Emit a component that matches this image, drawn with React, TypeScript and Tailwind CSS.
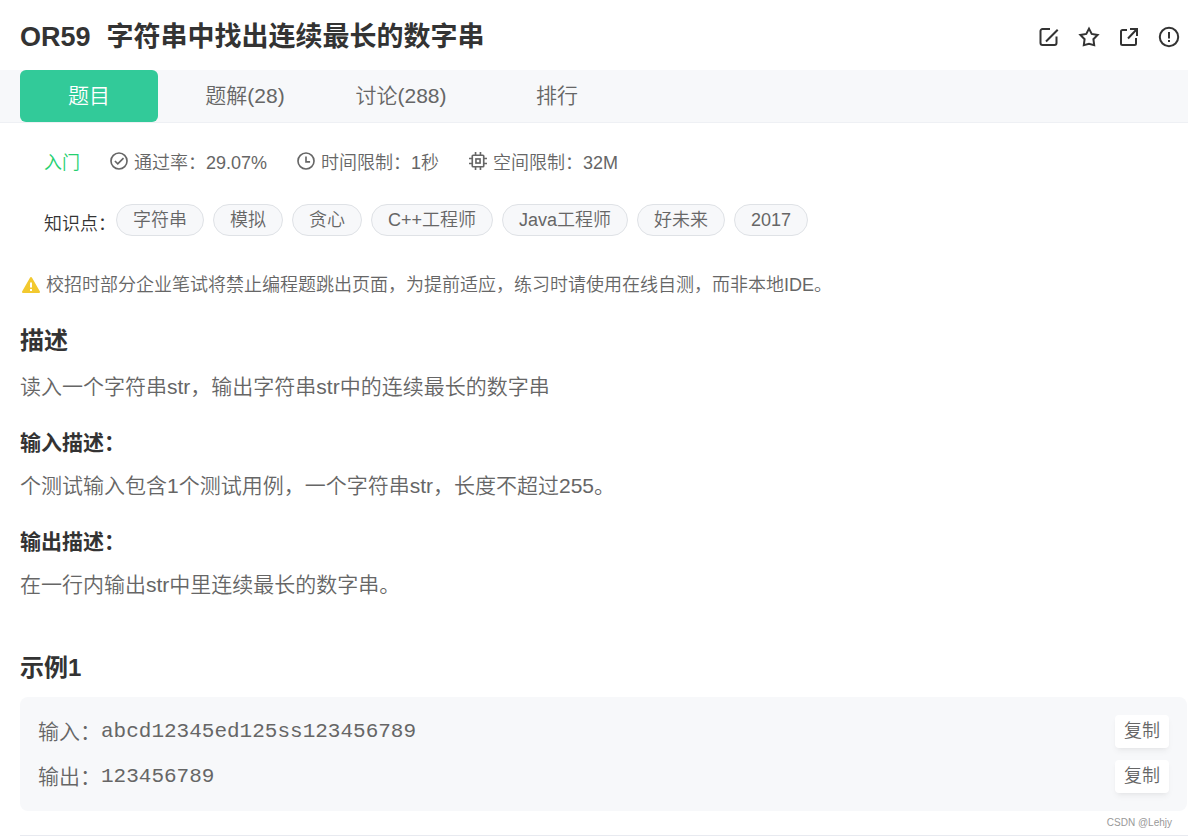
import React from "react";

type Meta = { icon: React.ReactNode; label: string; value: string };
type Sample = { label: string; value: string };

const tabs = ["题目", "题解(28)", "讨论(288)", "排行"];

const tags = ["字符串", "模拟", "贪心", "C++工程师", "Java工程师", "好未来", "2017"];

const samples: Sample[] = [
  { label: "输入：", value: "abcd12345ed125ss123456789" },
  { label: "输出：", value: "123456789" },
];

const Icon = ({
  children,
  className,
}: {
  children: React.ReactNode;
  className: string;
}) => (
  <svg
    viewBox="0 0 22 22"
    fill="none"
    stroke="currentColor"
    strokeWidth="2"
    className={className}
    aria-hidden="true"
  >
    {children}
  </svg>
);

const actions = [
  {
    name: "编辑",
    icon: (
      <>
        <path d="M12 3H4.500A2 2 0 0 0 2.500 5v12A2 2 0 0 0 4.500 19h12a2 2 0 0 0 2-2V10.500" />
        <path d="M8 15.500 19.700 3.800" />
      </>
    ),
  },
  {
    name: "收藏",
    icon: (
      <path d="m11 2.600 2.700 5.300 5.900 1-4.200 4.300.8 5.900-5.200-1.200-5.200 1.200.8-5.900L2.400 8.900l5.900-1L11 2.600Z" />
    ),
  },
  {
    name: "分享",
    icon: (
      <>
        <path d="M9 4H4.500A1.500 1.500 0 0 0 3 5.500v12A1.500 1.500 0 0 0 4.500 19h12a1.500 1.500 0 0 0 1.500-1.500V12" />
        <path d="M12 3h7v7M19 3l-9 9.500" />
      </>
    ),
  },
  {
    name: "反馈",
    icon: (
      <>
        <circle cx="11" cy="11" r="9.200" />
        <path d="M11 6v6.500M11 14v2" />
      </>
    ),
  },
];

const metas: Meta[] = [
  {
    label: "通过率：",
    value: "29.07%",
    icon: (
      <>
        <circle cx="11" cy="11" r="9.800" />
        <path d="m6 11 3.500 3.500 7-7" />
      </>
    ),
  },
  {
    label: "时间限制：",
    value: "1秒",
    icon: (
      <>
        <circle cx="11" cy="11" r="9.800" />
        <path d="M11 5.500V12h5" />
      </>
    ),
  },
  {
    label: "空间限制：",
    value: "32M",
    icon: (
      <>
        <rect x="4" y="4" width="14" height="14" rx="1" />
        <rect x="8.500" y="8.500" width="5" height="5" />
        <path d="M8 4V0M14 4V0M8 22v-4M14 22v-4M4 8H0M4 14H0M22 8h-4M22 14h-4" />
      </>
    ),
  },
];

const Section = ({ title, text }: { title: string; text: string }) => (
  <section className="mt-6">
    <h3 className="text-[21px] leading-8 font-bold text-[#333]">{title}</h3>
    <p className="mt-[11px] text-[21px] leading-8">{text}</p>
  </section>
);

const App = () => {
  return (
    <div className="min-h-screen bg-white font-['Liberation_Sans','Noto_Sans_CJK_SC',sans-serif] font-[350] text-[#666]">
      {/* title */}
      <header className="flex h-[70px] items-center justify-between pt-1 pr-2 pl-5">
        <h1 className="flex gap-4 text-[27px] leading-10 font-bold text-[#333]">
          <span>OR59</span>
          <span>字符串中找出连续最长的数字串</span>
        </h1>
        <div className="flex gap-[18px] text-[#333]">
          {actions.map((item) => (
            <button key={item.name} type="button" aria-label={item.name}>
              <Icon className="size-[22px]">{item.icon}</Icon>
            </button>
          ))}
        </div>
      </header>

      {/* tabs */}
      <nav className="flex gap-[18px] border-b border-[#eef0f4] bg-[#f7f8fa] pl-5">
        {tabs.map((tab, i) => (
          <a
            key={tab}
            href="#"
            className={
              i === 0
                ? "w-[138px] rounded-md bg-[#32ca99] text-center text-[21px] leading-[52px] text-white"
                : "w-[138px] text-center text-[21px] leading-[52px]"
            }
          >
            {tab}
          </a>
        ))}
      </nav>

      <main className="pl-5">
        <div className="flex items-center gap-[30px] pt-6 pl-6 text-lg leading-8">
          <span className="text-[#25d06f]">入门</span>
          <ul className="flex gap-[30px]">
            {metas.map((item) => (
              <li key={item.label} className="flex items-center gap-1.5">
                <Icon className="mb-1 size-[18px]">{item.icon}</Icon>
                <span>
                  {item.label}
                  {item.value}
                </span>
              </li>
            ))}
          </ul>
        </div>

        <div className="mt-[25px] flex pl-6 text-lg">
          <span className="pt-1 leading-8 text-[#333]">知识点：</span>
          <ul className="flex flex-wrap gap-[9px]">
            {tags.map((tag) => (
              <li key={tag}>
                <a
                  href="#"
                  className="block rounded-full border border-[#dfe2e6] bg-[#f7f8fa] px-4 leading-[30px]"
                >
                  {tag}
                </a>
              </li>
            ))}
          </ul>
        </div>

        <p className="mt-[29px] flex items-center gap-1 text-lg leading-8">
          <svg viewBox="0 0 22 22" className="size-[22px]" aria-hidden="true">
            <path
              d="M10.100 3.500a1 1 0 0 1 1.800 0l8 14a1 1 0 0 1-.9 1.500H3a1 1 0 0 1-.9-1.500Z"
              fill="#f2c92f"
            />
            <path d="M11 8.500v5M11 15v2" stroke="#fff" strokeWidth="2" />
          </svg>
          校招时部分企业笔试将禁止编程题跳出页面，为提前适应，练习时请使用在线自测，而非本地IDE。
        </p>

        <h2 className="mt-6 text-2xl font-bold text-[#333]">描述</h2>
        <p className="mt-[14px] text-[21px] leading-8">
          读入一个字符串str，输出字符串str中的连续最长的数字串
        </p>

        <Section
          title="输入描述："
          text="个测试输入包含1个测试用例，一个字符串str，长度不超过255。"
        />
        <Section title="输出描述：" text="在一行内输出str中里连续最长的数字串。" />

        <h2 className="mt-[51px] text-2xl font-bold text-[#333]">示例1</h2>
        <div className="mt-[13px] mr-px flex flex-col gap-3 rounded-lg bg-[#f7f8fa] p-[18px]">
          {samples.map((item) => (
            <div key={item.label} className="flex items-center justify-between">
              <div className="flex items-center text-[21px] leading-8">
                <span>{item.label}</span>
                <code className="font-['Liberation_Mono',monospace]">
                  {item.value}
                </code>
              </div>
              <button
                type="button"
                className="rounded-sm bg-white px-[9px] text-lg leading-[33px] shadow-md shadow-black/5"
              >
                复制
              </button>
            </div>
          ))}
        </div>

        <footer className="border-b border-[#e8eaf0] pt-0.5 pr-4 pb-0.5 text-right text-[10px] leading-5 text-[#999]">
          CSDN @Lehjy
        </footer>
      </main>
    </div>
  );
};

export default App;
